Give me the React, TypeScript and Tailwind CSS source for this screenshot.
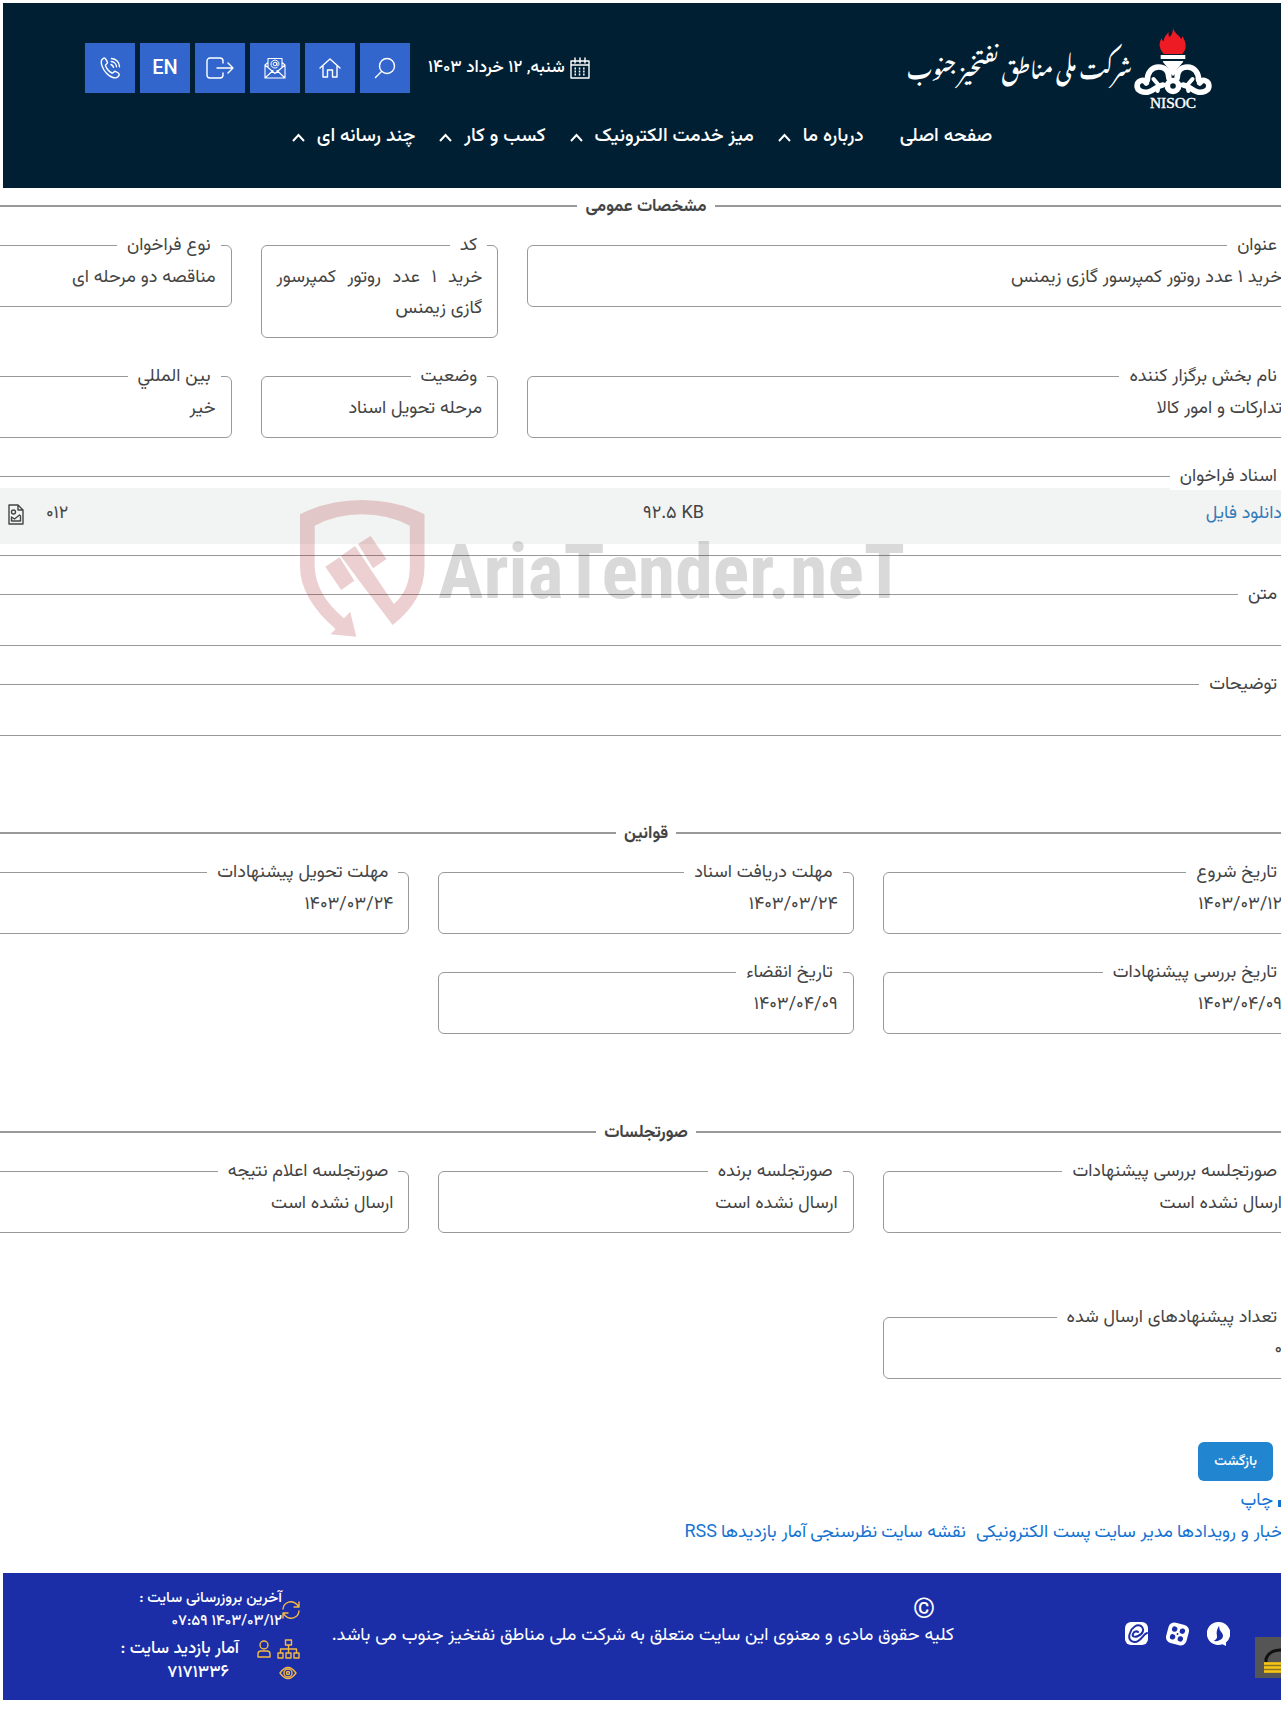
import type { ReactNode } from "react";

const navItems = [
  { label: "صفحه اصلی", menu: false },
  { label: "درباره ما", menu: true },
  { label: "میز خدمت الکترونیک", menu: true },
  { label: "کسب و کار", menu: true },
  { label: "چند رسانه ای", menu: true },
];

function Emblem() {
  return (
    <svg width="78" height="82" viewBox="0 0 76 82" preserveAspectRatio="none" role="img" aria-label="NISOC">
      <path
        d="M38 0c1 5 6 7 8 11 1-1 1-2 1-3 4 6 5 13 0 18H29c-5-6-5-11-2-16 0 2 1 3 2 3 0-4 3-7 5-9-1 3 0 4 1 5 2-3 3-5 3-9z"
        fill="#ed1c24"
      />
      <g fill="#fff">
        <rect x="26" y="27" width="24" height="4" />
        <path d="M28 33h20c-1 4-6 5-7 12l-3 3-3-3c-1-7-6-8-7-12z" />
      </g>
      <g fill="none" stroke="#fff" strokeWidth="5.500" strokeLinecap="round">
        <path d="M34 50c0-7-4-11-10-11-7 0-11 6-11 13" />
        <path d="M42 50c0-7 4-11 10-11 7 0 11 6 11 13" />
        <circle cx="38" cy="58" r="5.500" />
        <path d="M12 55c-3-5-9-2-9 3s6 7 11 6c6-1 7-6 14-7" />
        <path d="M64 55c3-5 9-2 9 3s-6 7-11 6c-6-1-7-6-14-7" />
        <path d="M19 51l5 6-1 6M57 51l-5 6 1 6" strokeWidth="4" />
      </g>
      <text x="38" y="80" textAnchor="middle" fontSize="15" fill="#fff" stroke="#fff" strokeWidth="0.4" className="font-[Liberation_Serif,serif]">
        NISOC
      </text>
    </svg>
  );
}

function Icon({ children, w = 22, h = 22 }: { children: ReactNode; w?: number; h?: number }) {
  return (
    <svg
      width={w}
      height={h}
      viewBox={`0 0 ${w} ${h}`}
      fill="none"
      stroke="currentColor"
      strokeWidth="1.4"
      strokeLinecap="round"
      strokeLinejoin="round"
      aria-hidden="true"
    >
      {children}
    </svg>
  );
}

const tools: { label: string; icon: ReactNode }[] = [
  {
    label: "جستجو",
    icon: (
      <Icon>
        <circle cx="13" cy="9" r="7.500" />
        <path d="M7.500 14.500L1.500 20.500" />
      </Icon>
    ),
  },
  {
    label: "خانه",
    icon: (
      <Icon>
        <path d="M1 11L11 2l10 9M4 9v11h4.500v-7h5v7H18V9" />
      </Icon>
    ),
  },
  {
    label: "ایمیل",
    icon: (
      <Icon>
        <path d="M1 8v13h20V8M1 21l8-7.500M21 21l-8-7.500M1 8l10 8.500L21 8M1 8l3-2.500M21 8l-3-2.500M4 10.500V1.500h14v9" strokeWidth="1.1" />
        <circle cx="11" cy="7" r="1.800" strokeWidth="1" />
        <path d="M12.800 5.500V8c0 1.500 2.200 1 2.200-1a4 4 0 1 0-2 3.600" strokeWidth="1" />
      </Icon>
    ),
  },
  {
    label: "ورود",
    icon: (
      <Icon w={28}>
        <path d="M17 6V4a3 3 0 0 0-3-3H4a3 3 0 0 0-3 3v14a3 3 0 0 0 3 3h10a3 3 0 0 0 3-3v-2M11 11h16M22 6l5 5-5 5" />
      </Icon>
    ),
  },
  { label: "EN", icon: <span className="pt-0.5 text-xl">EN</span> },
  {
    label: "تماس",
    icon: (
      <Icon>
        <path d="M3 2.500L5 1c1-.500 3 3 3.500 4.500.300 1-2.500 2-2 3 1 3.500 3.500 6 6.500 7.500 1.200.500 2-2 3.200-1.700 1.500.500 4.500 2.200 4 3.700l-1.500 2c-2 2-7 .500-11-3.500S1 5.500 3 2.500z" />
        <path d="M12 7.500a4 4 0 0 1 2.500 2.800M12.300 4.500c2.700.200 5 2.500 5.200 5.300M12.500 1.500c4.500.200 8 3.800 8 8.300" />
      </Icon>
    ),
  },
];

function Heading({ children }: { children: ReactNode }) {
  return (
    <h2 className="-mr-[17px] mb-[11px] -ml-1.5 flex h-7 items-center gap-2 text-[17px] font-bold before:h-0.5 before:flex-1 before:bg-[#999] after:h-0.5 after:flex-1 after:bg-[#999]">
      <span className="pt-0.5">{children}</span>
    </h2>
  );
}

function Field({ label, children, className = "" }: { label: string; children: ReactNode; className?: string }) {
  return (
    <fieldset className={`min-w-0 rounded-md border border-[#999] px-[15px] pb-3 ${className}`}>
      <legend className="relative -mr-[5px] h-7 bg-white px-2.5 leading-[30px]">{label}</legend>
      <p className="mt-1 text-justify leading-[31px]">{children}</p>
    </fieldset>
  );
}

function Panel({ label, children }: { label: string; children?: ReactNode }) {
  return (
    <fieldset className="min-w-0 rounded-md border border-[#999] pb-[11px]">
      <legend className="relative z-10 mr-2.5 h-7 bg-white px-2.5 leading-[30px]">{label}</legend>
      {children ?? <div className="h-[26px]" />}
    </fieldset>
  );
}

function Watermark() {
  return (
    <div dir="ltr" className="pointer-events-none absolute top-[312px] left-[300px] flex items-start" aria-hidden="true">
      <svg width="126" height="138" viewBox="0 0 126 138" fill="#a0141a" fillOpacity="0.2">
        <path
          fillRule="evenodd"
          d="M0 14.300Q28 0 62 0t62.500 14.300v52.400q0 34-31.900 58.300L58 79.300l12.600-10L93.900 104q15.900-14 15.900-37.300v-41Q88 14.300 62 14.300T14.700 25.700v41q1 28 29.300 51.600l6.200-6.600 6.100 25-25.700-2.400 4.900-5.300Q0 98 0 66.700z"
        />
        <path d="M25.300 66.700l14.300-9.400 14.700 23.400L41.200 90z" />
        <path d="M40.800 56l14.300-10 15.500 23.300-12.600 10z" />
        <path d="M58 44l12.600-8 15.900 23-13.500 9.300z" />
      </svg>
      <span className="mt-4 ml-3 font-['Roboto_Condensed','Open_Sans_Condensed',Roboto,sans-serif] text-[76px] leading-[112px] font-bold text-black/15">
        AriaTender.neT
      </span>
    </div>
  );
}

export default function App() {
  return (
    <div dir="rtl" className="overflow-hidden bg-white font-[Vazirmatn,'DejaVu_Sans',sans-serif] text-lg text-[#444]">
      <header className="mt-[3px] ml-[3px] flex min-h-[185px] flex-col bg-[#001f33] pt-[22px] text-white">
        <div className="flex items-start justify-between pr-[69px] pl-[82px]">
          <a href="#" className="flex items-start gap-0.5 pt-[3px]">
            <Emblem />
            <span className="font-['Noto_Nastaliq_Urdu',Vazirmatn,serif] text-[21px] leading-[76px] font-semibold whitespace-nowrap">
              شرکت ملی مناطق نفتخیز جنوب
            </span>
          </a>
          <div className="mt-[18px] flex items-center gap-[18px]">
            <div className="flex items-center gap-[5px] text-[17px] font-medium">
              <Icon w={20}>
                <path d="M1 4h18v17H1zM1 8h18M5 1v5M10 1v5M15 1v5" />
                <path d="M4.500 11.500h11M4.500 14.500h11M4.500 17.500h11" strokeWidth="1.800" strokeDasharray="1.500 2.800" strokeLinecap="butt" />
              </Icon>
              <span>شنبه, ۱۲ خرداد ۱۴۰۳</span>
            </div>
            <div className="flex gap-[5px]">
              {tools.map((t) => (
                <button key={t.label} type="button" aria-label={t.label} className="flex size-[50px] items-center justify-center bg-[#3366cc] font-medium">
                  {t.icon}
                </button>
              ))}
            </div>
          </div>
        </div>
        <nav className="mt-3 flex justify-center gap-6 text-[19px] leading-[30px] font-medium">
          {navItems.map((n) => (
            <a key={n.label} href="#" className={n.menu ? "flex items-center gap-3" : "pl-3"}>
              {n.label}
              {n.menu && (
                <svg width="13" height="9" viewBox="0 0 13 9" fill="none" stroke="currentColor" strokeWidth="2" aria-hidden="true">
                  <path d="M1 8l5.500-6L12 8" />
                </svg>
              )}
            </a>
          ))}
        </nav>
      </header>

      <main className="relative pt-1">
        <Heading>مشخصات عمومی</Heading>
        <div className="-mr-[17px] -ml-1.5 flex flex-col gap-6">
          <div className="grid grid-cols-5 items-start gap-x-[29px] gap-y-6">
            <Field label="عنوان" className="col-span-3">خرید ۱ عدد روتور کمپرسور گازی زیمنس</Field>
            <Field label="کد">خرید ۱ عدد روتور کمپرسور گازی زیمنس</Field>
            <Field label="نوع فراخوان">مناقصه دو مرحله ای</Field>
            <Field label="نام بخش برگزار کننده" className="col-span-3">تدارکات و امور کالا</Field>
            <Field label="وضعیت">مرحله تحویل اسناد</Field>
            <Field label="بین المللي">خیر</Field>
          </div>
          <Panel label="اسناد فراخوان">
            <div className="-mt-0.5 grid h-14 grid-cols-[10fr_11fr_auto] items-center bg-[#f2f4f3] pr-[15px] pb-1 pl-[13px]">
              <a href="#" className="text-[#337ab7]">دانلود فایل</a>
              <span dir="ltr" className="text-right">۹۲.۵ KB</span>
              <span className="flex items-center gap-[22px]">
                ۰۱۲
                <Icon w={16} h={21}>
                  <path d="M1 1h9l5 5v14H1zM10 1v5h5" />
                  <circle cx="5.500" cy="8" r="2" />
                  <path d="M3.500 17v-4l3 2 5-4 1 1v5z" />
                </Icon>
              </span>
            </div>
          </Panel>
          <Panel label="متن" />
          <Panel label="توضیحات" />
        </div>

        <section className="mt-[83px]">
          <Heading>قوانین</Heading>
          <div className="-mr-[17px] -ml-1.5 grid grid-cols-3 gap-x-[29px] gap-y-6">
            <Field label="تاریخ شروع">۱۴۰۳/۰۳/۱۲</Field>
            <Field label="مهلت دریافت اسناد">۱۴۰۳/۰۳/۲۴</Field>
            <Field label="مهلت تحویل پیشنهادات">۱۴۰۳/۰۳/۲۴</Field>
            <Field label="تاریخ بررسی پیشنهادات">۱۴۰۳/۰۴/۰۹</Field>
            <Field label="تاریخ انقضاء">۱۴۰۳/۰۴/۰۹</Field>
          </div>
        </section>

        <section className="mt-[84px]">
          <Heading>صورتجلسات</Heading>
          <div className="-mr-[17px] -ml-1.5 grid grid-cols-3 gap-x-[29px] gap-y-[70px]">
            <Field label="صورتجلسه بررسی پیشنهادات">ارسال نشده است</Field>
            <Field label="صورتجلسه برنده">ارسال نشده است</Field>
            <Field label="صورتجلسه اعلام نتیجه">ارسال نشده است</Field>
            <Field label="تعداد پیشنهادهای ارسال شده">۰</Field>
          </div>
        </section>

        <div className="mt-[63px] flex flex-col items-start text-[#1473d2]">
          <button type="button" className="mr-2 mb-1 h-[39px] rounded-md bg-[#2185d0] px-4 text-sm font-medium text-white">
            بازگشت
          </button>
          <a href="#" className="-mr-[13px] flex items-center gap-1 leading-[33px]">
            <svg width="17" height="18" viewBox="0 0 17 18" fill="currentColor" aria-hidden="true">
              <path d="M4 1h9v5H4zM1 7h15v7h-3v-3H4v3H1zM5 12h7v5H5z" />
            </svg>
            چاپ
          </a>
          <div className="-mr-1.5 flex gap-1 leading-[31px] whitespace-nowrap">
            <a href="#">اخبار و رویدادها</a>
            <a href="#">مدیر سایت</a>
            <a href="#" className="ml-1.5">پست الکترونیکی</a>
            <a href="#">نقشه سایت</a>
            <a href="#">نظرسنجی</a>
            <a href="#">آمار بازدیدها</a>
            <a href="#">RSS</a>
          </div>
        </div>
        <Watermark />
      </main>

      <footer className="relative mt-6 mb-[18px] ml-[3px] flex min-h-[127px] items-start bg-[#1b2ea8] pr-[51px] font-medium text-white">
        <div className="absolute top-16 right-0">
          <svg width="26" height="41" viewBox="0 0 26 41" aria-hidden="true">
            <path fill="#555" d="M0 0h26v41H0z" />
            <path d="M11 25v-3q3-9 15-9" fill="none" stroke="#111" strokeWidth="3" />
            <path d="M9 25h17v11H9z" fill="#8a7420" />
            <path d="M9 26.500h17M9 30.500h17M9 34.500h17" stroke="#f5c518" strokeWidth="2.500" />
          </svg>
        </div>
        <div className="mt-[49px] flex gap-[18px]">
          <a href="#" aria-label="سروش">
            <svg width="23" height="24" viewBox="0 0 23 24" aria-hidden="true">
              <path fill="#fff" d="M11.500 0a11.500 11.500 0 1 0 4 22.200L19 24v-3.500A11.500 11.500 0 0 0 11.500 0z" />
              <path fill="#1b2ea8" d="M12 4q0 4 3 7c3 4-1 9-8.500 8q4-2 3.500-5c-1-4 0-7 2-10z" />
            </svg>
          </a>
          <a href="#" aria-label="آپارات">
            <svg width="23" height="24" viewBox="0 0 23 24" aria-hidden="true">
              <g transform="rotate(15 11.500 12)">
                <rect x="1" y="1.500" width="21" height="21" rx="6" fill="#fff" />
                <g fill="#1b2ea8">
                  <circle cx="7.500" cy="8" r="2.700" />
                  <circle cx="15.500" cy="8" r="2.700" />
                  <circle cx="7.500" cy="16" r="2.700" />
                  <circle cx="15.500" cy="16" r="2.700" />
                  <circle cx="11.500" cy="12" r="1" />
                </g>
              </g>
            </svg>
          </a>
          <a href="#" aria-label="ایتا">
            <svg width="23" height="24" viewBox="0 0 23 24" aria-hidden="true">
              <rect width="23" height="23" rx="6" fill="#fff" />
              <path
                d="M22 11c-4 1-6 9-12 9-5 0-7-4-5-9 2-6 7-9 11-7 4 3 2 8-3 10-4 2-6 0-5-2 1-3 4-3 5-2"
                fill="none"
                stroke="#1b2ea8"
                strokeWidth="2"
                strokeLinecap="round"
              />
            </svg>
          </a>
        </div>
        <div className="mt-[25px] mr-[171px] text-lg leading-6 font-normal">
          <div className="pr-[19px] text-[28px] leading-[26px]">©</div>
          <p>کلیه حقوق مادی و معنوی این سایت متعلق به شرکت ملی مناطق نفتخیز جنوب می باشد.</p>
        </div>
        <div className="mt-3.5 mr-auto ml-[118px] w-[179px] text-[15px] leading-[23px] text-white">
          <div className="flex items-center">
            <span className="text-[#f5b942]">
              <Icon w={18} h={18}>
                <path d="M1 8a8 8 0 0 1 14-4.500L17 6M17 1v5h-5M17 10a8 8 0 0 1-14 4.500L1 12M1 17v-5h5" />
              </Icon>
            </span>
            <p>
              آخرین بروزرسانی سایت :
              <br />
              ۱۴۰۳/۰۳/۱۲ ۰۷:۵۹
            </p>
          </div>
          <div className="mt-1 flex items-center gap-1.5 text-[17px] leading-6 whitespace-nowrap">
            <span className="flex items-center gap-1.5 text-[#f5b942]">
              <Icon w={23} h={20}>
                <path d="M8.500 1h6v5h-6zM1 14h5v5H1zM9 14h5v5H9zM17 14h5v5h-5zM11.500 6v8M3.500 14v-4h16v4" />
              </Icon>
              <Icon w={14} h={18}>
                <circle cx="7" cy="5" r="4" />
                <path d="M1 17v-3q0-3 3-3h6q3 0 3 3v3z" />
              </Icon>
            </span>
            <span className="mr-3">آمار بازدید سایت :</span>
          </div>
          <div className="flex items-center pr-[3px] leading-6">
            <span className="text-[#f5b942]">
              <Icon w={18} h={14}>
                <path d="M1 7q8-11 16 0-8 11-16 0z" />
                <circle cx="9" cy="7" r="4" />
                <circle cx="9" cy="7" r="1.500" />
              </Icon>
            </span>
            <span className="mr-[50px] text-[17px]">۷۱۷۱۳۳۶</span>
          </div>
        </div>
      </footer>
    </div>
  );
}
